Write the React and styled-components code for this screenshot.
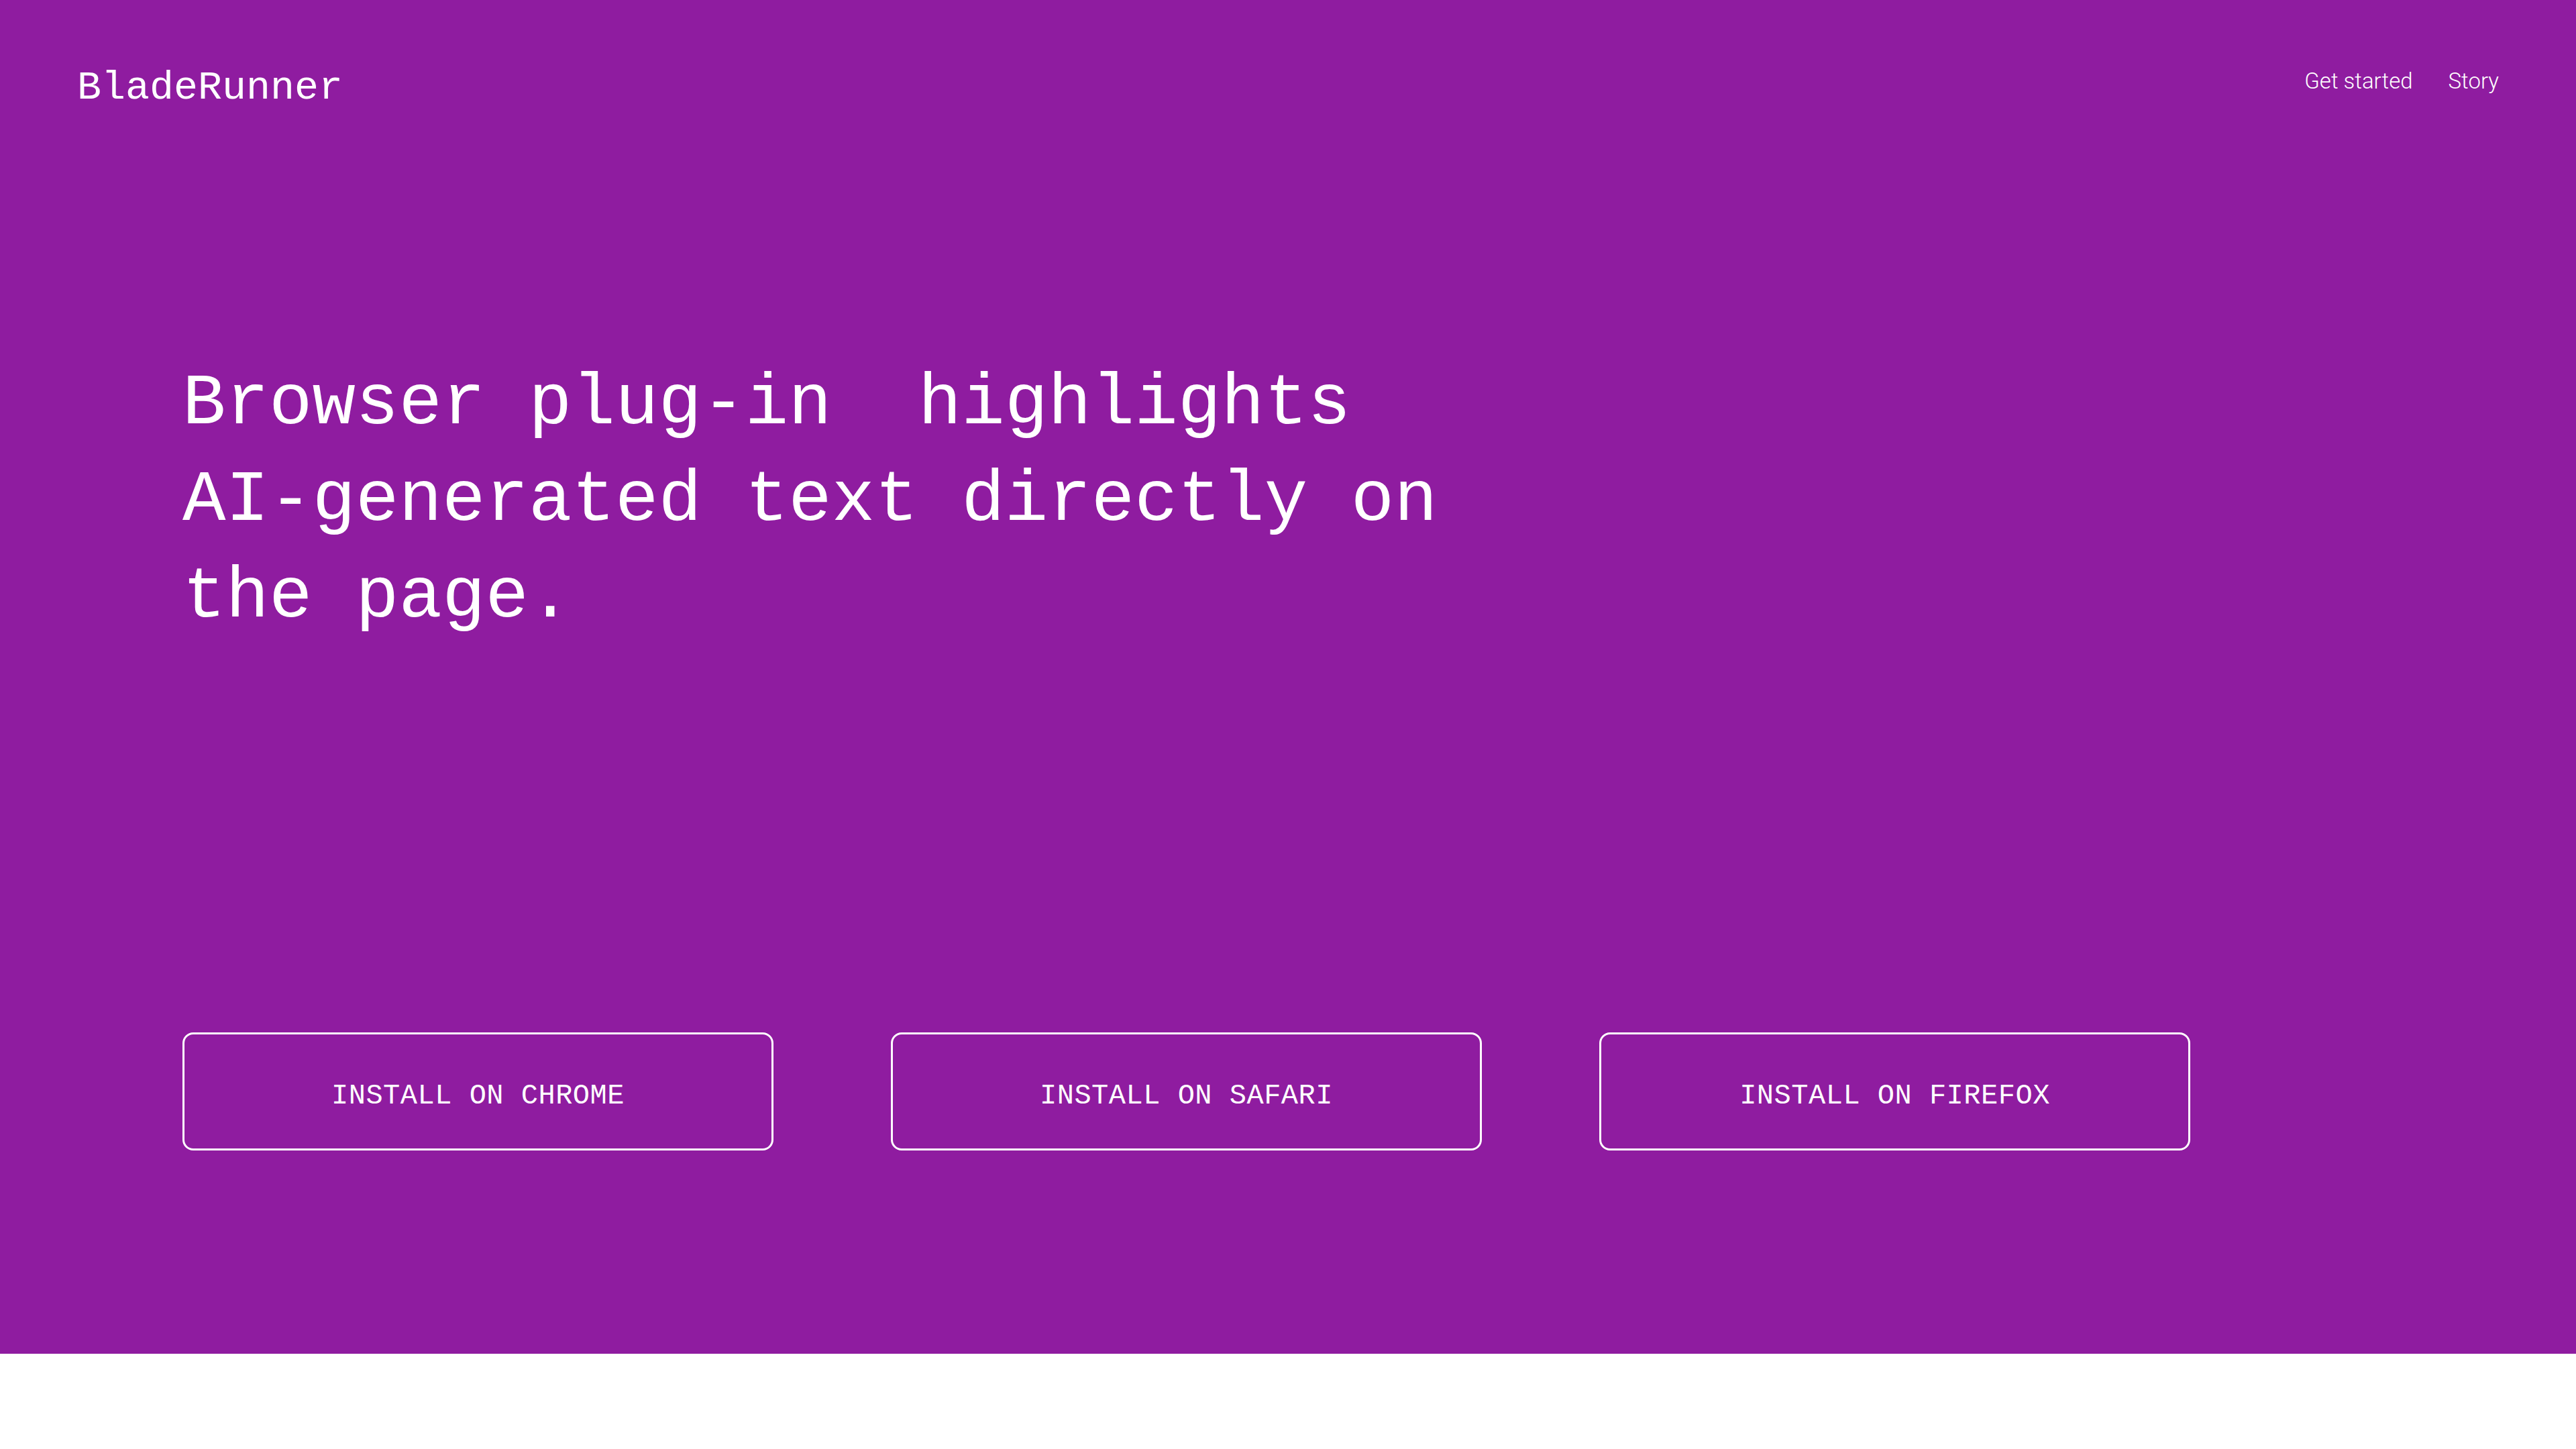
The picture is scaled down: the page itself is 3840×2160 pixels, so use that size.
import React from "react";
import styled, { createGlobalStyle } from "styled-components";

const GlobalStyle = createGlobalStyle`
  html, body {
    margin: 0;
    padding: 0;
    background: #ffffff;
  }
  * {
    box-sizing: border-box;
  }
`;

const Hero = styled.section`
  background: #8f1ca0;
  color: #ffffff;
  height: 2018px;
  display: flex;
  flex-direction: column;
`;

const Header = styled.header`
  display: flex;
  justify-content: space-between;
  align-items: flex-start;
  padding: 95px 115px 0 115px;
`;

const Logo = styled.a`
  font-family: "Liberation Mono", "DejaVu Sans Mono", monospace;
  font-size: 60px;
  line-height: 72px;
  color: #ffffff;
  text-decoration: none;
`;

const Nav = styled.nav`
  display: flex;
  gap: 53px;
  margin-top: 6px;
`;

const NavLink = styled.a`
  font-family: Roboto, "Liberation Sans", sans-serif;
  font-weight: 300;
  font-size: 33px;
  line-height: 40px;
  color: #ffffff;
  text-decoration: none;
`;

const Content = styled.div`
  padding: 0 272px;
`;

const Headline = styled.h1`
  font-family: "Liberation Mono", "DejaVu Sans Mono", monospace;
  font-weight: 400;
  font-size: 107.5px;
  line-height: 144px;
  margin: 364px 0 0 0;
  max-width: 1920px;
`;

const Buttons = styled.div`
  display: grid;
  grid-template-columns: repeat(3, 881px);
  column-gap: 175px;
  margin-top: 576px;
`;

const InstallButton = styled.button`
  height: 176px;
  border: 3.5px solid #ffffff;
  border-radius: 16px;
  background: transparent;
  color: #ffffff;
  font-family: "Liberation Mono", "DejaVu Sans Mono", monospace;
  font-size: 42px;
  letter-spacing: 0.5px;
  padding: 13px 0 0 0;
  cursor: pointer;
  &:hover {
    background: rgba(255, 255, 255, 0.08);
  }
`;

const browsers = ["CHROME", "SAFARI", "FIREFOX"];

export default function App() {
  return (
    <>
      <GlobalStyle />
      <Hero>
        <Header>
          <Logo href="#">BladeRunner</Logo>
          <Nav>
            <NavLink href="#">Get started</NavLink>
            <NavLink href="#">Story</NavLink>
          </Nav>
        </Header>
        <Content>
          <Headline>
            {"Browser plug-in\u00a0 highlights AI-generated text directly on the page."}
          </Headline>
          <Buttons>
            {browsers.map((b) => (
              <InstallButton key={b}>INSTALL ON {b}</InstallButton>
            ))}
          </Buttons>
        </Content>
      </Hero>
    </>
  );
}
